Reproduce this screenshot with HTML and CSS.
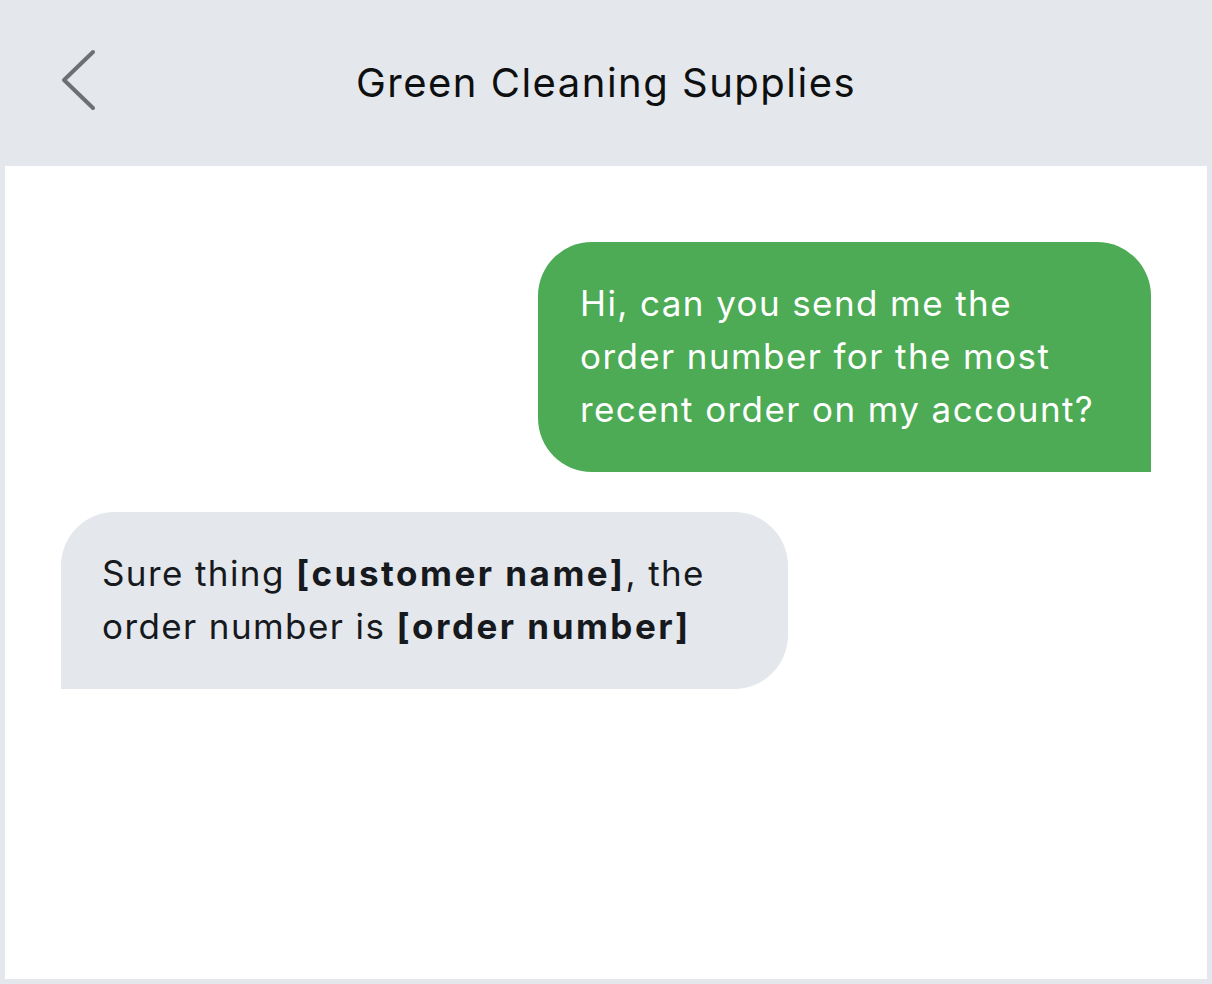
FILE: index.html
```html
<!DOCTYPE html>
<html lang="en">
<head>
  <meta charset="UTF-8">
  <meta name="viewport" content="width=device-width, initial-scale=1.0">
  <title>Green Cleaning Supplies</title>
  <link rel="stylesheet" href="styles.css">
</head>
<body>
  <header class="top-bar">
    <a class="back-btn" href="#" aria-label="Back">
      <svg width="40" height="64" viewBox="0 0 40 64">
        <polyline points="32,4 3,32 32,60" fill="none" stroke="#6c6f73" stroke-width="4" stroke-linecap="round" stroke-linejoin="round"/>
      </svg>
    </a>
    <h1 class="title">Green Cleaning Supplies</h1>
  </header>

  <main class="chat">
    <div class="bubble sent">
      Hi, can you send me the<br>
      order number for the most<br>
      recent order on my account?
    </div>
    <div class="bubble received">
      Sure thing <b>[customer name]</b>, the<br>
      order number is <b>[order number]</b>
    </div>
  </main>
</body>
</html>
```

FILE: styles.css
```css
/* Reset */
html, body {
  margin: 0;
  padding: 0;
  box-sizing: border-box;
  font-family: Inter, Roboto, sans-serif;
}

body {
  background-color: #e4e7eb;
  height: 984px;
  display: flex;
  flex-direction: column;
}

.top-bar {
  position: relative;
  height: 166px;
  display: flex;
  align-items: center;
  justify-content: center;
}

.back-btn {
  position: absolute;
  left: 61px;
  top: 48px;
  display: block;
  line-height: 0;
}

.title {
  margin: 0;
  font-size: 40px;
  font-weight: 400;
  letter-spacing: 1.5px;
  color: #0e0f10;
  margin-top: -2px;
}

.chat {
  flex: 1;
  margin: 0 5px 5px;
  background-color: #fff;
  padding: 76px 56px 0;
  display: flex;
  flex-direction: column;
  gap: 40px;
}

.bubble {
  font-size: 35px;
  line-height: 53px;
  letter-spacing: 1.4px;
  padding: 35px 42px 36px;
  box-sizing: border-box;
}

.bubble b {
  font-weight: 700;
  letter-spacing: 2.5px;
}

.sent {
  align-self: flex-end;
  width: 613px;
  background-color: #4cab54;
  color: #fff;
  border-radius: 54px 54px 0 54px;
}

.received {
  align-self: flex-start;
  width: 727px;
  background-color: #e4e7eb;
  color: #16191d;
  padding-left: 41px;
  border-radius: 54px 54px 54px 0;
}
```
